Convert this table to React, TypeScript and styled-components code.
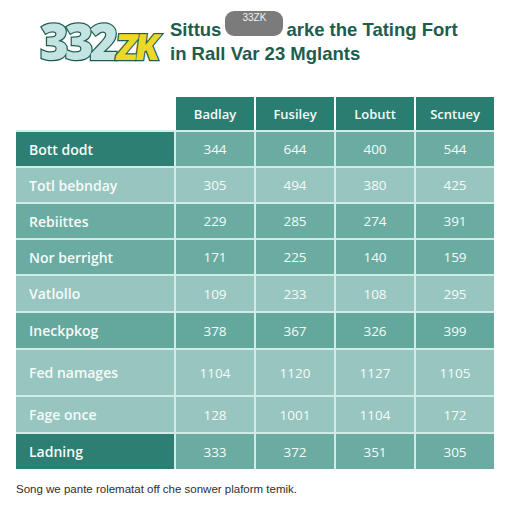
import React from 'react';
import styled, { createGlobalStyle } from 'styled-components';

const GlobalStyle = createGlobalStyle`
  body {
    margin: 0;
    background: #ffffff;
    font-family: 'Open Sans', 'Liberation Sans', sans-serif;
  }
`;

const Page = styled.div`
  width: 512px;
  height: 512px;
  padding-top: 16px;
  box-sizing: border-box;
  overflow: hidden;
`;

const Header = styled.header`
  display: flex;
  align-items: center;
  gap: 9px;
  padding-left: 40px;
  height: 50px;
`;

const Logo = styled.div`
  display: flex;
  align-items: baseline;
  flex-shrink: 0;
  width: 121px;
  overflow: visible;
  font-family: 'Open Sans', sans-serif;
  font-weight: 800;
  line-height: 1;
  -webkit-text-stroke: 2.5px #1f5d52;
  paint-order: stroke fill;
`;

const Digits = styled.span`
  color: #c4e4e1;
  font-size: 49px;
  letter-spacing: -4px;
`;

const ZK = styled.span`
  display: inline-block;
  color: #ecd927;
  font-size: 36px;
  letter-spacing: -3px;
  margin-left: 2px;
  transform: skewX(-8deg);
`;

const Title = styled.div`
  color: #1d5c50;
  font-family: 'Liberation Sans', Arial, sans-serif;
  font-weight: 700;
  font-size: 18.5px;
  line-height: 24px;
  margin-top: 2px;
`;

const Badge = styled.span`
  display: inline-block;
  vertical-align: top;
  width: 58px;
  height: 25px;
  margin: -7px 3px 0 4px;
  border-radius: 9px;
  background: #7b7b7b;
  color: #f2f2f2;
  font-family: 'Liberation Sans', Arial, sans-serif;
  font-size: 10px;
  font-weight: 400;
  line-height: 14px;
  text-align: center;
`;

const Table = styled.div`
  margin: 31px 0 0 16px;
  width: 478px;
  display: flex;
  flex-direction: column;
  gap: 2px;
  background: #d3ebe7;
`;

const Row = styled.div<{ $h: number }>`
  display: grid;
  grid-template-columns: 158px repeat(4, 78px);
  column-gap: 2px;
  height: ${p => p.$h}px;
`;

const HeadRow = styled(Row)`
  background: #ffffff;
`;

const HeadCell = styled.div<{ $empty?: boolean }>`
  background: ${p => (p.$empty ? '#ffffff' : '#2a7e71')};
  color: #f4fbfa;
  font-size: 13px;
  font-weight: 600;
  display: flex;
  align-items: center;
  justify-content: center;
`;

const tones: Record<string, string> = {
  dark: '#2c7f72',
  mid: '#6aaca2',
  deep: '#64a89d',
  light: '#96c6bf',
};

const Label = styled.div<{ $tone: string }>`
  background: ${p => tones[p.$tone]};
  color: #f6fbfa;
  font-size: 14px;
  font-weight: 600;
  display: flex;
  align-items: center;
  padding-left: 13px;
`;

const Cell = styled.div<{ $tone: string }>`
  background: ${p => tones[p.$tone]};
  color: #f6fbfa;
  font-size: 13.5px;
  display: flex;
  align-items: center;
  justify-content: center;
`;

const Footer = styled.p`
  margin: 14px 0 0 16px;
  font-size: 11.5px;
  color: #2e2e2e;
  font-family: 'Liberation Sans', sans-serif;
`;

const heads = ['Badlay', 'Fusiley', 'Lobutt', 'Scntuey'];

const rows = [
  { label: 'Bott dodt', lt: 'dark', tone: 'mid', h: 34, v: ['344', '644', '400', '544'] },
  { label: 'Totl bebnday', lt: 'light', tone: 'light', h: 34, v: ['305', '494', '380', '425'] },
  { label: 'Rebiittes', lt: 'mid', tone: 'mid', h: 34, v: ['229', '285', '274', '391'] },
  { label: 'Nor berright', lt: 'mid', tone: 'mid', h: 34, v: ['171', '225', '140', '159'] },
  { label: 'Vatlollo', lt: 'light', tone: 'light', h: 35, v: ['109', '233', '108', '295'] },
  { label: 'Ineckpkog', lt: 'deep', tone: 'deep', h: 35, v: ['378', '367', '326', '399'] },
  { label: 'Fed namages', lt: 'light', tone: 'light', h: 45, v: ['1104', '1120', '1127', '1105'] },
  { label: 'Fage once', lt: 'light', tone: 'light', h: 35, v: ['128', '1001', '1104', '172'] },
  { label: 'Ladning', lt: 'dark', tone: 'mid', h: 35, v: ['333', '372', '351', '305'] },
];

const App: React.FC = () => {
  return (
    <Page>
      <GlobalStyle />
      <Header>
        <Logo>
          <Digits>332</Digits>
          <ZK>ZK</ZK>
        </Logo>
        <Title>
          <div>
            Sittus<Badge>33ZK</Badge>arke the Tating Fort
          </div>
          <div>in Rall Var 23 Mglants</div>
        </Title>
      </Header>
      <Table>
        <HeadRow $h={33}>
          <HeadCell $empty />
          {heads.map(h => (
            <HeadCell key={h}>{h}</HeadCell>
          ))}
        </HeadRow>
        {rows.map(r => (
          <Row key={r.label} $h={r.h}>
            <Label $tone={r.lt}>{r.label}</Label>
            {r.v.map((n, i) => (
              <Cell key={i} $tone={r.tone}>{n}</Cell>
            ))}
          </Row>
        ))}
      </Table>
      <Footer>Song we pante rolematat off che sonwer plaform temik.</Footer>
    </Page>
  );
};

export default App;
